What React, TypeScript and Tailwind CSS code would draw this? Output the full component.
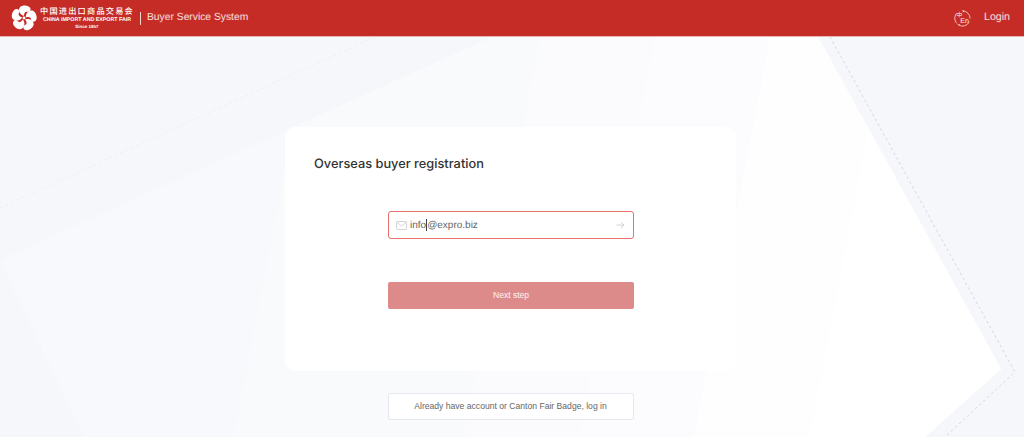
const arial = "font-['Liberation_Sans',sans-serif]";

function Flower() {
  const petals = [0, 72, 144, 216, 288];
  return (
    <svg width="26" height="26" viewBox="0 0 54 54" className="shrink-0">
      {petals.map((a) => (
        <g key={a} transform={`rotate(${a} 27 27)`}>
          <path d="M27 23 C17 20 14 10 19 4 C24 -1 37 0 40 6 C42 12 38 15 34 14 C30 13 27 15 27 23 Z" fill="#fff" />
        </g>
      ))}
      <circle cx="27" cy="27" r="3" fill="#fff" />
    </svg>
  );
}

function LangIcon() {
  return (
    <svg width="17" height="17" viewBox="0 0 18 18" fill="none" stroke="#fff" strokeWidth="0.8" className="opacity-90">
      <path d="M2.6 3.6 A8 8 0 0 0 2.8 14" />
      <path d="M9.6 1 A8 8 0 0 1 17 9" />
      <path d="M16.2 12.4 A8 8 0 0 1 5 16" />
      <path d="M8.8 0.6 L10.4 1 L9.4 2.4" />
      <path d="M3.6 14.6 L5 16 L6.4 15.4" />
      <text x="2.4" y="7.4" fontSize="6.5" fill="#fff" stroke="none" fontFamily="'Noto Sans CJK SC', sans-serif">中</text>
      <text x="6.6" y="14" fontSize="7.5" fill="#fff" stroke="none" fontFamily="'Liberation Sans', sans-serif">En</text>
    </svg>
  );
}

// faint slanted bands, each one a shade lighter than the last
const bands = [
  { top: 310, fill: "#f9fafc" },
  { top: 540, fill: "#fbfbfd" },
  { top: 655, fill: "#fcfcfe" },
  { top: 770, fill: "#fefefe" },
  { top: 886, fill: "#ffffff" },
];

function Background() {
  return (
    <svg className="absolute inset-0 h-full w-full" viewBox="0 0 1024 400" preserveAspectRatio="none">
      <defs>
        <clipPath id="sheet">
          <polygon points="0,223 492,0 818,0 1001,332 925,400 84,400" />
        </clipPath>
      </defs>
      <g clipPath="url(#sheet)">
        <rect width="1024" height="400" fill="#f8f9fc" />
        {bands.map((b) => (
          <polygon key={b.top} points={`${b.top},0 1024,0 1024,400 ${b.top - 76},400`} fill={b.fill} />
        ))}
      </g>
      <polyline points="830,0 1015,335 945,400" fill="none" stroke="#d3d6dc" strokeWidth="1" strokeDasharray="2.5 3" />
      <line x1="0" y1="171" x2="375" y2="0" stroke="#eef0f5" strokeWidth="1" strokeDasharray="3 3" />
    </svg>
  );
}

export default function App() {
  return (
    <div className={`flex h-[437px] w-[1024px] flex-col overflow-hidden bg-[#f5f7fb] [text-rendering:geometricPrecision] ${arial}`}>
      <header className="z-10 flex h-[37px] shrink-0 items-center border-b border-[#e8b5b2] bg-[#c52c26] pl-[11px] pr-[14px] text-white">
        <Flower />
        <div className="mt-[-2px] ml-[4px] flex w-[92px] flex-col items-center">
          <span className="whitespace-nowrap font-['Noto_Sans_CJK_SC',sans-serif] text-[8.2px] leading-[12px] font-medium tracking-[1.2px]">中国进出口商品交易会</span>
          <span className="whitespace-nowrap text-[5.3px] leading-[7px] font-bold">CHINA IMPORT AND EXPORT FAIR</span>
          <span className="whitespace-nowrap text-[4.5px] leading-[6px] font-bold">Since 1957</span>
        </div>
        <div className="ml-[7px] h-[13px] w-px bg-white/80" />
        <span className="ml-[6px] text-[10.3px] text-white/85">Buyer Service System</span>
        <div className="ml-auto flex items-center gap-[13px]">
          <LangIcon />
          <span className="text-[10.6px] text-white/85">Login</span>
        </div>
      </header>

      <main className="relative flex flex-1 flex-col items-center">
        <Background />
        <section className="relative mt-[90px] ml-[-3px] h-[244px] w-[451px] rounded-[10px] bg-white pt-[29px]">
          <h1 className="pl-[29px] font-['Inter',sans-serif] text-[12.8px] leading-[18px] font-medium text-[#333]">Overseas buyer registration</h1>
          <div className="mt-[37px] ml-[103px] flex h-[28px] w-[246px] items-center rounded-[3px] border border-[#e4716c] pl-[7px] pr-[8px]">
            <svg width="11" height="9" viewBox="0 0 11 9" fill="none" stroke="#c9c9c9" strokeWidth="0.8">
              <rect x="0.5" y="0.5" width="10" height="8" rx="0.8" />
              <path d="M0.8 1 L5.5 5 L10.2 1" />
            </svg>
            <span className="ml-[3px] text-[10px] text-[#666]">info</span>
            <span className="h-[12px] w-px bg-[#444]" />
            <span className="text-[10px] text-[#666]">@expro.biz</span>
            <svg className="ml-auto" width="9" height="8" viewBox="0 0 9 8" fill="none" stroke="#c9c9c9" strokeWidth="0.8">
              <path d="M0.5 4 H8 M5 1 L8 4 L5 7" />
            </svg>
          </div>
          <button className="mt-[43px] ml-[103px] block h-[27px] w-[246px] rounded-[2px] bg-[#dd8a8b] text-[8.5px] text-white/90">Next step</button>
        </section>
        <button className="relative mt-[22px] ml-[-3px] h-[27px] w-[246px] rounded-[2px] border border-[#e6e8ee] bg-white text-[8.6px] text-[#666]">
          Already have account or Canton Fair Badge, log in
        </button>
      </main>
    </div>
  );
}
